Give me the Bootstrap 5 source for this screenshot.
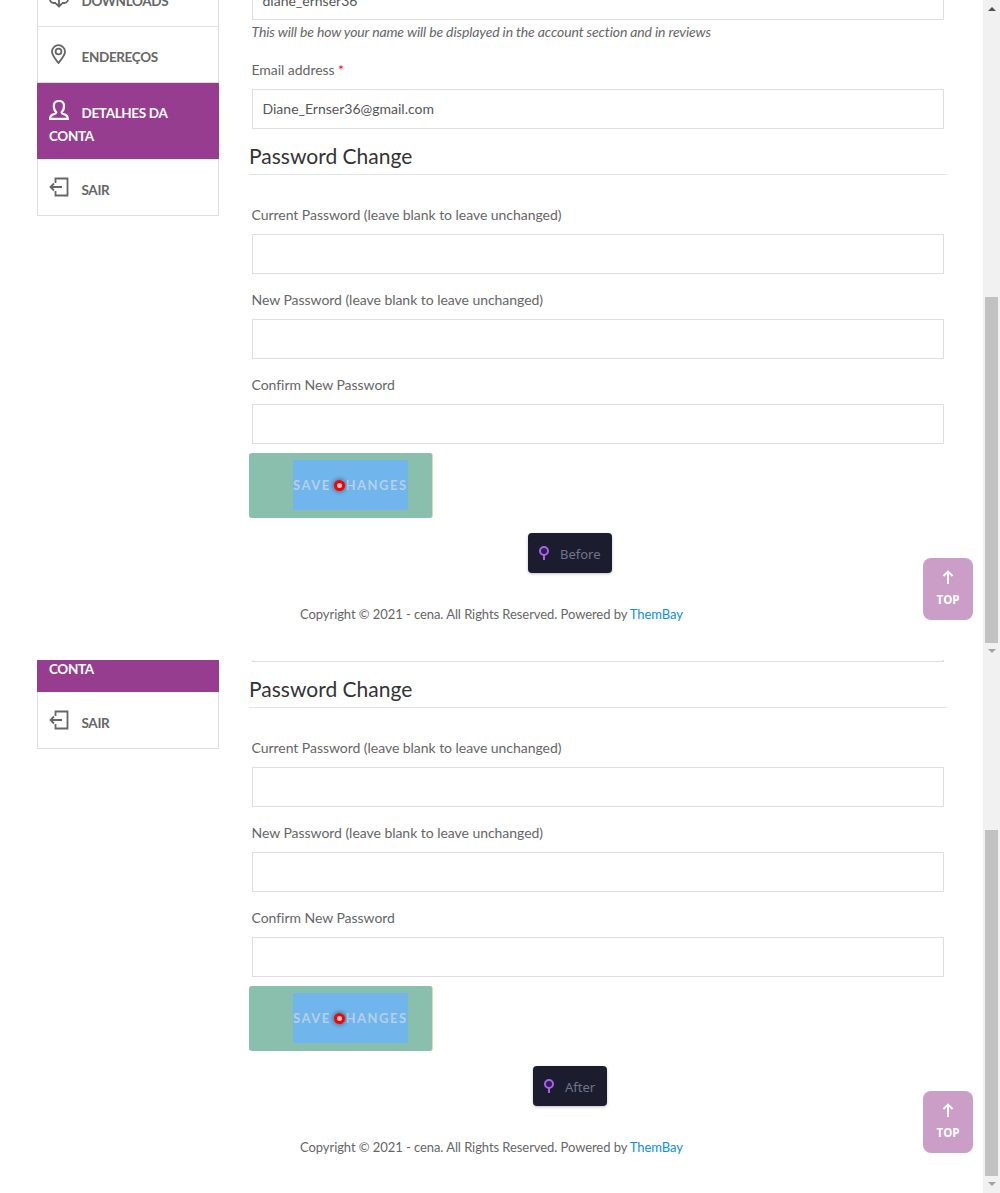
<!DOCTYPE html>
<html lang="pt">
<head>
<meta charset="utf-8">
<meta name="viewport" content="width=device-width, initial-scale=1">
<title>Detalhes da conta</title>
<link rel="stylesheet" href="https://cdn.jsdelivr.net/npm/bootstrap@5.3.0/dist/css/bootstrap.min.css">
<style>
body{font-family:Lato,"Open Sans",sans-serif;font-size:14px;line-height:24px;color:#666;background:#fff;overflow:hidden}
.shot{height:660px}
.shot.second{height:533px}
.stage{margin-top:-30px;padding-left:37px;gap:30px}
.second .stage{margin-top:-157px}
.side{width:182px;flex:none}
.side .list-group-item{height:56px;padding:19px 11px 0;border:1px solid #dedede;border-top:0;border-radius:0;color:#666;font-weight:700;line-height:23px;font-size:13.5px;letter-spacing:-.35px;background:#fff}
.side .list-group-item:first-child{height:57px;padding-top:20px}
.side .list-group-item.active{height:76px;margin:0;background:#963d8f;border-color:#963d8f;color:#fff;padding-top:17px}
.side .list-group-item.exit{height:57px;padding-top:20px}
.side svg{width:20px;height:20px;margin-right:12.5px;vertical-align:-2px;fill:none;stroke:currentColor;stroke-width:1.8}
.side .list-group-item:not(.active) svg{margin-top:-3px}
.main{width:698px;flex:none;padding-top:10px}
.fields{padding:0 3px}
.fields em{letter-spacing:-.135px;text-indent:-.5px}
.main .form-control{height:40px;border:1px solid #dedede;border-radius:0;padding:0 9.500px;font-size:14px;color:#555;line-height:38px;background:#fff}
.main .form-control:first-child{line-height:40px}
.main label{display:block;height:24px;margin:14px 0 7px;line-height:24px;letter-spacing:-.04px;text-indent:-.5px}
.main legend{font-size:21px;line-height:24px;height:46px;padding-top:15px;margin:0 0 28px;border-bottom:1px solid #e3e3e3;color:#333;float:none}
.req{color:#f00}
.save{width:184px;height:65px;margin-top:9px;padding:7px 25px 8px 44px;border:0;border-right:1px solid #d9dcae;background:#89bfac;border-radius:3px}
.sel{width:115px;height:50px;background:#70b5ec;color:#b5d0ea;font-weight:700;letter-spacing:1.5px;font-size:13px;line-height:50px;text-align:left;white-space:nowrap}
.hit{left:41px;top:20px;width:11px;height:11px;border:3.5px solid #f00;border-radius:50%;background:#fcc;box-shadow:0 0 4px 1px rgba(0,0,0,.4)}
.copy{margin:84px 0 0 51px;font-size:13px;letter-spacing:-.07px;white-space:nowrap}
.copy a{color:#0b8df2;text-decoration:none}
.tagbox{left:528px;bottom:87px;width:84px;height:40px;padding:2px 0 0 10px;background:#1b1d2e;color:#71758c;border-radius:4px;font-family:"Noto Sans",sans-serif;font-size:13px;box-shadow:0 1px 3px rgba(0,0,0,.25)}
.second .tagbox{left:533px;width:74px}
.tagbox svg{width:12px;height:16px;margin:-3px 10px 0 0}
.totop{left:923px;bottom:40px;width:50px;height:62px;background:#cb9ec7;border-radius:8px;color:#fff;font:700 11.500px/14px "Open Sans",sans-serif;padding-top:12px}
.totop svg{width:12px;height:15px;margin-bottom:8px;fill:none;stroke:#fff;stroke-width:1.9}
.track{left:983px;top:0;width:17px;height:100%;background:#f1f1f1}
.thumb{left:2px;bottom:17px;width:13px;height:346px;background:#c1c1c1}
.up,.down{left:5px;border:4px solid transparent;border-width:0 4px 4px;border-bottom-color:#505050;top:7px}
.down{top:auto;bottom:7px;border-width:4px 4px 0;border-top-color:#a3a3a3}
</style>
<script src="https://cdn.jsdelivr.net/npm/bootstrap@5.3.0/dist/js/bootstrap.bundle.min.js"></script>
</head>
<body>
<svg class="d-none">
<symbol id="pin" viewBox="0 0 20 20"><path d="M9.500 19C6 14.500 3 11.200 3 7.700a6.500 6.500 0 0 1 13 0C16 11.200 13 14.500 9.500 19Z"/><circle cx="9.500" cy="7.500" r="2.900"/></symbol>
<symbol id="person" viewBox="0 0 20 20"><path d="M7.300 12.300C5.400 10.700 4.800 8.300 4.800 6.200 4.800 3 6.800 1 9.900 1S15 3 15 6.200c0 2.100-.6 4.500-2.500 6.100.2 1.700 1.700 1.800 3.500 2.300 2 .6 2.600 1.700 2.800 4.200H1c.2-2.500.8-3.600 2.800-4.200 1.800-.5 3.300-.6 3.500-2.300Z" stroke-width="2.200"/></symbol>
<symbol id="exit" viewBox="0 0 20 20"><path d="M6.500 6V1.500h12v17h-12V14M13 10H1.500M5 6.500 1.500 10 5 13.500"/></symbol>
<symbol id="cloud" viewBox="0 0 20 20"><path d="M7 15H4.500a3.500 3.500 0 0 1 0-7C5 4 8 2 11 3c2 .6 3 2 3.500 4a4 4 0 0 1 1 8H13M10 8v10M7 15.500l3 3 3-3"/></symbol>
</svg>

<section class="shot position-relative overflow-hidden">
<div class="stage d-flex align-items-start">
<nav class="side list-group">
<a class="list-group-item"><svg><use href="#cloud"/></svg>DOWNLOADS</a>
<a class="list-group-item"><svg><use href="#pin"/></svg>ENDEREÇOS</a>
<a class="list-group-item active"><svg><use href="#person"/></svg>DETALHES DA CONTA</a>
<a class="list-group-item exit"><svg><use href="#exit"/></svg>SAIR</a>
</nav>
<form class="main">
<div class="fields"><div class="form-control">diane_ernser36</div><em class="d-block">This will be how your name will be displayed in the account section and in reviews</em>
<label>Email address <span class="req">*</span></label><div class="form-control">Diane_Ernser36@gmail.com</div></div>
<legend>Password Change</legend>
<div class="fields"><label>Current Password (leave blank to leave unchanged)</label><div class="form-control"></div>
<label>New Password (leave blank to leave unchanged)</label><div class="form-control"></div>
<label>Confirm New Password</label><div class="form-control"></div></div>
<button type="button" class="save d-block"><span class="sel d-block position-relative">SAVE CHANGES<i class="hit position-absolute"></i></span></button>
<p class="copy">Copyright © 2021 - cena. All Rights Reserved. Powered by <a href="#">ThemBay</a></p>
</form>
</div>
<div class="tagbox position-absolute d-flex align-items-center"><svg viewBox="0 0 12 16"><circle cx="6" cy="6" r="4" fill="#35195a" stroke="#a665e8" stroke-width="2"/><path d="M6 10v5" stroke="#a665e8" stroke-width="2"/></svg>Before</div>
<div class="totop position-absolute d-flex flex-column align-items-center"><svg viewBox="0 0 12 15"><path d="M6 14V2M1.500 6 6 1.500 10.500 6"/></svg>TOP</div>
<div class="track position-absolute"><i class="up position-absolute"></i><i class="thumb position-absolute"></i><i class="down position-absolute"></i></div>
</section>

<section class="shot second position-relative overflow-hidden">
<div class="stage d-flex align-items-start">
<nav class="side list-group">
<a class="list-group-item"></a>
<a class="list-group-item"></a>
<a class="list-group-item active"><svg><use href="#person"/></svg>DETALHES DA CONTA</a>
<a class="list-group-item exit"><svg><use href="#exit"/></svg>SAIR</a>
</nav>
<form class="main">
<div class="fields"><div class="form-control"></div><em class="d-block">&nbsp;</em>
<label></label><div class="form-control"></div></div>
<legend>Password Change</legend>
<div class="fields"><label>Current Password (leave blank to leave unchanged)</label><div class="form-control"></div>
<label>New Password (leave blank to leave unchanged)</label><div class="form-control"></div>
<label>Confirm New Password</label><div class="form-control"></div></div>
<button type="button" class="save d-block"><span class="sel d-block position-relative">SAVE CHANGES<i class="hit position-absolute"></i></span></button>
<p class="copy">Copyright © 2021 - cena. All Rights Reserved. Powered by <a href="#">ThemBay</a></p>
</form>
</div>
<div class="tagbox position-absolute d-flex align-items-center"><svg viewBox="0 0 12 16"><circle cx="6" cy="6" r="4" fill="#35195a" stroke="#a665e8" stroke-width="2"/><path d="M6 10v5" stroke="#a665e8" stroke-width="2"/></svg>After</div>
<div class="totop position-absolute d-flex flex-column align-items-center"><svg viewBox="0 0 12 15"><path d="M6 14V2M1.500 6 6 1.500 10.500 6"/></svg>TOP</div>
<div class="track position-absolute"><i class="thumb position-absolute"></i><i class="down position-absolute"></i></div>
</section>
</body>
</html>
